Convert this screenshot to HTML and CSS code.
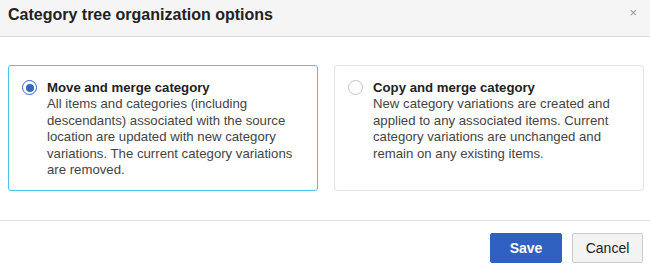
FILE: index.html
```html
<!DOCTYPE html>
<html>
<head>
<meta charset="utf-8">
<link rel="stylesheet" href="styles.css">
</head>
<body>
<div class="modal">
  <div class="modal-header">
    <h1 class="modal-title">Category tree organization options</h1>
    <span class="close">&#215;</span>
  </div>
  <div class="modal-body">
    <label class="option selected">
      <span class="radio"><span class="dot"></span></span>
      <span class="option-text">
        <span class="option-title">Move and merge category</span>
        <span class="option-desc">All items and categories (including descendants) associated with the source location are updated with new category variations. The current category variations are removed.</span>
      </span>
    </label>
    <label class="option">
      <span class="radio"></span>
      <span class="option-text">
        <span class="option-title">Copy and merge category</span>
        <span class="option-desc">New category variations are created and applied to any associated items. Current category variations are unchanged and remain on any existing items.</span>
      </span>
    </label>
  </div>
  <div class="modal-footer">
    <button class="btn btn-primary">Save</button>
    <button class="btn btn-default">Cancel</button>
  </div>
</div>
</body>
</html>
```
FILE: styles.css
```css
html, body {
  margin: 0;
  padding: 0;
  background: #ffffff;
}
body {
  font-family: "Liberation Sans", Arial, sans-serif;
  color: #444444;
}
.modal {
  width: 650px;
}
.modal-header {
  background: #f5f5f5;
  border-bottom: 1px solid #dddddd;
  display: flex;
  align-items: center;
  justify-content: space-between;
  padding: 0 13px 0 8px;
  box-sizing: border-box;
  height: 37px;
}
.modal-title {
  margin: 0;
  font-size: 16px;
  font-weight: bold;
  color: #222222;
  line-height: 20px;
  padding-bottom: 6px;
}
.close {
  font-size: 13px;
  color: #999999;
  line-height: 13px;
  padding-bottom: 12px;
}
.modal-body {
  display: grid;
  grid-template-columns: 310px 310px;
  column-gap: 16px;
  padding: 28px 7px 29px 8px;
  border-bottom: 1px solid #dddddd;
}
.option {
  display: flex;
  gap: 10px;
  border: 1px solid #e3e3e3;
  border-radius: 3px;
  padding: 13px 16px 11px 13px;
  font-size: 13.2px;
  line-height: 16.5px;
}
.option.selected {
  border-color: #4cc6ef;
}
.radio {
  flex: none;
  width: 15px;
  height: 15px;
  box-sizing: border-box;
  border: 1px solid #c4c4c4;
  border-radius: 50%;
  margin-top: 1px;
  display: flex;
  align-items: center;
  justify-content: center;
}
.selected .radio {
  border: 1.5px solid #3466c2;
}
.dot {
  width: 8px;
  height: 8px;
  border-radius: 50%;
  background: #3466c2;
}
.option-text {
  display: flex;
  flex-direction: column;
}
.option-title {
  font-weight: bold;
  color: #222222;
  line-height: 17px;
}
.option-desc {
  color: #444444;
}
.modal-footer {
  display: flex;
  justify-content: flex-end;
  gap: 10px;
  padding: 12px 7px 6px 0;
}
.btn {
  height: 30px;
  font-family: "Liberation Sans", Arial, sans-serif;
  font-size: 14px;
  border-radius: 2px;
  padding: 0;
}
.btn-primary {
  width: 72px;
  background: #3061c1;
  border: 1px solid #3061c1;
  color: #ffffff;
  font-weight: bold;
}
.btn-default {
  width: 71px;
  background: #f3f3f3;
  border: 1px solid #cccccc;
  color: #222222;
}
```
